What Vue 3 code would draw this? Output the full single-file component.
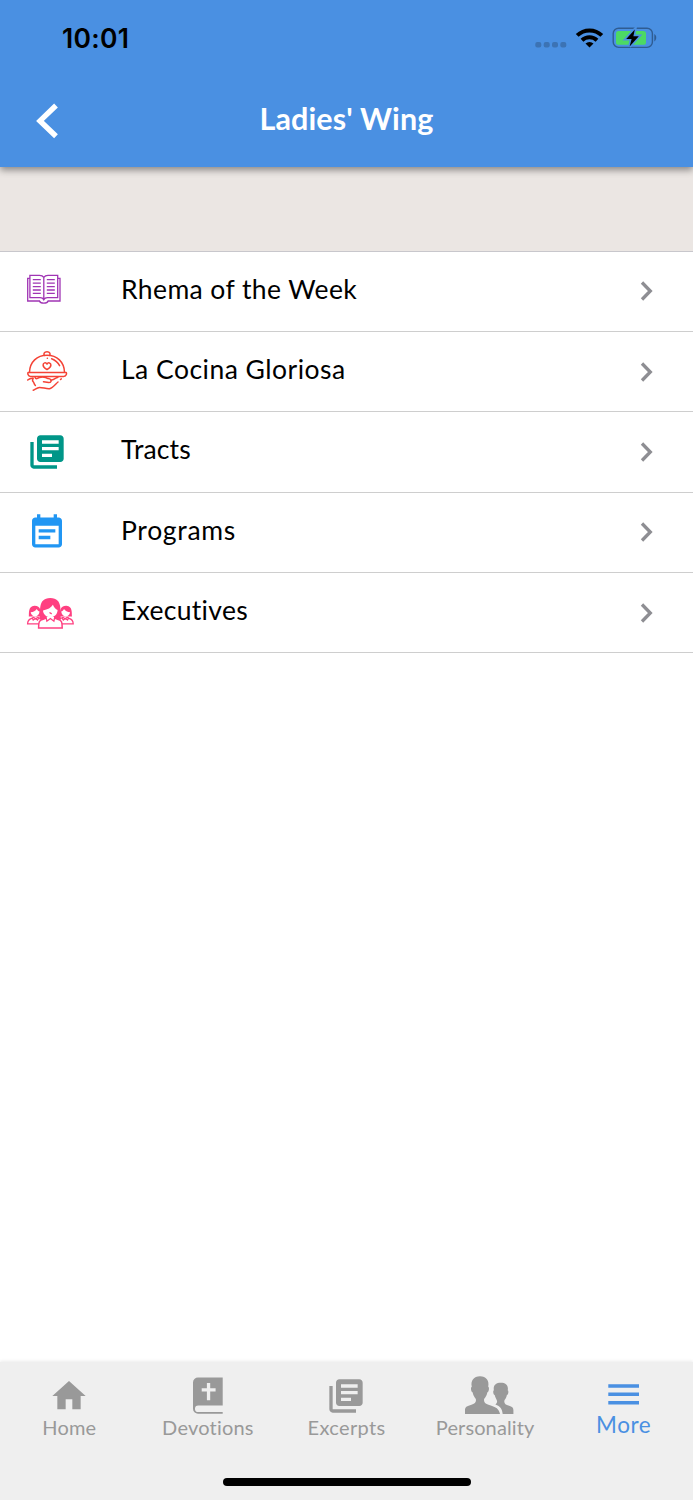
<script setup>
const rows = [
  { id: 'rhema', label: 'Rhema of the Week', spacing: 0.4 },
  { id: 'cocina', label: 'La Cocina Gloriosa', spacing: 0.48 },
  { id: 'tracts', label: 'Tracts', spacing: 0.15 },
  { id: 'programs', label: 'Programs', spacing: 0.7 },
  { id: 'executives', label: 'Executives', spacing: 0.3 }
]

const tabs = [
  { id: 'home', label: 'Home', spacing: 0.2 },
  { id: 'devotions', label: 'Devotions', spacing: 0.2 },
  { id: 'excerpts', label: 'Excerpts', spacing: 0.35 },
  { id: 'personality', label: 'Personality', spacing: 0.1 },
  { id: 'more', label: 'More', spacing: 0.6 }
]

const active = 'more'
</script>

<template>
  <div class="screen">
    <header class="header">
      <div class="status">
        <span class="status__time">10:01</span>
        <svg class="status__icons" width="124" height="24" viewBox="534 26 124 24">
          <g fill="#3c73b4">
            <rect x="535.3" y="42" width="6" height="5.6" rx="2" />
            <rect x="543.7" y="42" width="6" height="5.6" rx="2" />
            <rect x="552" y="42" width="6" height="5.6" rx="2" />
            <rect x="560.3" y="42" width="6" height="5.6" rx="2" />
          </g>
          <g fill="none" stroke="#000" stroke-width="4">
            <path d="M577.2 35.4a17.6 17.6 0 0 1 24.6 0" />
            <path d="M582 40.2a10.8 10.8 0 0 1 15 0" />
          </g>
          <path d="M589.5 47.6l-4-4.1a5.8 5.8 0 0 1 8 0z" />
          <rect x="613.2" y="28.2" width="39.2" height="19.2" rx="5.4" fill="none" stroke="#2f5c92" stroke-width="1.4" />
          <rect x="616" y="31" width="30" height="13.8" rx="2.6" fill="#4cd964" />
          <path d="M654.3 34v7.4c2.6-1.4 2.6-6 0-7.4z" fill="#2f5c92" />
          <path d="M634.8 29.6L626.2 39h5.4l-2 7.4 9.2-10.2h-5.4z" stroke="#4a90e2" stroke-width="3.2" />
          <path d="M634.8 29.6L626.2 39h5.4l-2 7.4 9.2-10.2h-5.4z" />
        </svg>
      </div>
      <div class="nav">
        <svg class="nav__back" width="24" height="36" viewBox="36 103 24 36">
          <path d="M56 105.5L40 120.9l16 15.4" fill="none" stroke="#fff" stroke-width="5.4" />
        </svg>
        <h1 class="nav__title">Ladies' Wing</h1>
      </div>
    </header>

    <div class="band" />

    <ul class="list">
      <li v-for="row in rows" :key="row.id" class="row">
        <svg v-if="row.id === 'rhema'" class="row__icon" width="94" height="79" viewBox="0 0 94 79">
          <g fill="none" stroke="#a035b4" stroke-width="1.3">
            <path d="M43.8 25.4c-1-1.5-2.4-2-4.2-2H29.9v22.3h10.3c1.8 0 2.9.6 3.6 2 .7-1.4 1.8-2 3.6-2h10.3V23.4H48c-1.8 0-3.2.5-4.2 2zv22" />
            <path d="M29.9 26.4h-2.2V49h11.8c.4 1.4 2.2 2.2 4.3 2.2s3.9-.8 4.3-2.2H60V26.4h-2.3" />
            <path d="M32.8 27.7h8M32.8 31.2h8M32.8 34.6h8M32.8 38h8M32.8 41.3h8M46.8 27.7h8M46.8 31.2h8M46.8 34.6h8M46.8 38h8M46.8 41.3h8" />
          </g>
        </svg>
        <svg v-else-if="row.id === 'cocina'" class="row__icon" width="94" height="79" viewBox="0 0 94 79">
          <g fill="none" stroke="#f44336" stroke-width="1.5" stroke-linecap="round" stroke-linejoin="round">
            <path d="M44.4 23.4c-1-1.4-.5-3.6 2.6-3.6s3.6 2.2 2.6 3.6" />
            <path d="M29.5 40.2c.3-10.3 7.5-17 17.5-17s17.2 6.7 17.5 17" />
            <path d="M28.3 40.5H66c1 0 .7 3.9-2.3 3.9H30.5c-2.7 0-3.2-3.9-2.2-3.9z" />
            <path d="M47 37.6c-2.5-1.5-3.9-3-3.9-4.7 0-2.2 2.7-2.9 3.9-.9 1.2-2 3.9-1.1 3.9.9 0 1.7-1.4 3.2-3.9 4.7z" />
            <path d="M51.6 26.7c3.5 1.3 6.4 3.7 8 7M47.3 26.300h.1" />
            <path d="M27.700 48c1.500-1.400 3-1.700 5.200-1.700" />
            <path d="M33 46.300c-.6 1.600-.7 2.700.2 3.500 1.100 1.100.6 2.400 2.200 3.700" />
            <path d="M35 45c.2 1.300.9 1.800 1.800 1.600 1.700-1.300 3.500-1.700 5.800-1.700 2.500 0 4 .6 5.500 1.700 2.300.3 3.500 1.200 2.900 2.800-.4 1-2 1.200-4 .9l-3.500-.5" />
            <path d="M51 48.200c2.700-.2 4.800-2 7-3.200M60.500 47.500l.8-.6M58 50c-2.400 1.900-5 6-8.500 6.700-3.300.3-6.800-1.300-10-1.200-2.400.4-4.200 1.900-6.300 2.800" />
          </g>
        </svg>
        <svg v-else-if="row.id === 'tracts'" class="row__icon" width="94" height="79" viewBox="0 0 94 79">
          <path transform="translate(27 20) scale(1.667)" fill="#009688" d="M4 6H2v14c0 1.100.9 2 2 2h14v-2H4V6zm16-4H8c-1.100 0-2 .9-2 2v12c0 1.100.9 2 2 2h12c1.100 0 2-.9 2-2V4c0-1.100-.9-2-2-2zm-1 9H9V9h10v2zm-4 4H9v-2h6v2zm4-8H9V5h10v2z" />
        </svg>
        <svg v-else-if="row.id === 'programs'" class="row__icon" width="94" height="79" viewBox="0 0 94 79">
          <path transform="translate(27 19.5) scale(1.667)" fill="#2196f3" d="M17 10H7v2h10v-2zm2-7h-1V1h-2v2H8V1H6v2H5c-1.110 0-1.990.9-1.990 2L3 19c0 1.100.89 2 2 2h14c1.100 0 2-.9 2-2V5c0-1.100-.9-2-2-2zm0 16H5V8h14v11zm-5-5H7v2h7v-2z" />
        </svg>
        <svg v-else class="row__icon" width="94" height="79" viewBox="0 0 94 79">
          <defs>
            <g id="side-woman">
              <path d="M28.8 43.500c.4-3.200-1-10.200 5.600-10.800 6.300-.2 6.900 5.500 6.300 10.800z" fill="#ff4081" />
              <path d="M30.700 39.300c2.600-.4 4.900-1.300 6.100-3.300.7 1.400 1.700 2.300 2.800 2.600-.4 2.900-2.100 4.900-4.400 4.900s-4.100-1.700-4.500-4.200z" fill="#fff" />
              <path d="M40 50.800H27.600c.1-3.200.9-4.700 4.200-5.500l1.900-.8 2 1.200 2-1.200 4.400 1.600z" fill="#fff" stroke="#ff4081" stroke-width="1.300" />
              <path d="M32 44.500l1.200 2.600 2.300-1.500 2 1.500 1.200-2" fill="none" stroke="#ff4081" stroke-width="1.200" />
            </g>
          </defs>
          <use href="#side-woman" />
          <use href="#side-woman" transform="translate(100.800 0) scale(-1 1)" />
          <path d="M39.500 46.500c1.700-7.500-2.700-21.300 10.800-21.500 13.500.2 9.100 14 10.800 21.500z" fill="#ff4081" />
          <path d="M43 37.400c4.700-.8 8.100-2.600 9.900-5.600 1 2.700 2.600 4.400 4.700 5.100-.1 4.300-3.200 7.300-7.200 7.300-4.100 0-7.100-2.900-7.400-6.800z" fill="#fff" />
          <path d="M38.600 54.900c0-5.900.4-7.600 4.600-8.600l3.700-1.600h7l3.700 1.600c4.200 1 4.600 2.700 4.600 8.600z" fill="#fff" stroke="#ff4081" stroke-width="1.500" />
          <path d="M46 43.900l.9 4.300 3.500-2.700 3.500 2.700.9-4.300" fill="#fff" stroke="#ff4081" stroke-width="1.300" />
          <path d="M49.500 39.500l2.200 1.300" stroke="#ff4081" stroke-width="1.400" />
        </svg>
        <span class="row__label" :style="{ letterSpacing: `${row.spacing}px` }">{{ row.label }}</span>
        <svg class="row__chevron" width="16" height="22" viewBox="0 0 16 22">
          <path d="M3 2.500l8.300 8.500L3 19.500" fill="none" stroke="#8e8e93" stroke-width="3.300" />
        </svg>
      </li>
    </ul>

    <nav class="tabs">
      <div v-for="tab in tabs" :key="tab.id" class="tab" :class="{ 'tab--active': tab.id === active }">
        <svg v-if="tab.id === 'home'" class="tab__icon" width="40" height="40" viewBox="0 0 24 24">
          <path d="M10 20v-6h4v6h5v-8h3L12 3 2 12h3v8z" />
        </svg>
        <svg v-else-if="tab.id === 'devotions'" class="tab__icon" width="40" height="40" viewBox="0 0 40 40">
          <path d="M34.700 1.500H10a5 5 0 0 0-5 5v26.300a5 5 0 0 0 5 5h24.700v-1.700H10.300a3.200 3.200 0 0 1 0-6.700h24.400zM18.900 7h3.300v5.200h5.400v3.200h-5.400v8.900h-3.300v-8.900h-5.200v-3.200h5.200z" fill-rule="evenodd" />
        </svg>
        <svg v-else-if="tab.id === 'excerpts'" class="tab__icon" width="40" height="40" viewBox="0 0 24 24">
          <path d="M4 6H2v14c0 1.100.9 2 2 2h14v-2H4V6zm16-4H8c-1.100 0-2 .9-2 2v12c0 1.100.9 2 2 2h12c1.100 0 2-.9 2-2V4c0-1.100-.9-2-2-2zm-1 9H9V9h10v2zm-4 4H9v-2h6v2zm4-8H9V5h10v2z" />
        </svg>
        <svg v-else-if="tab.id === 'personality'" class="tab__icon" width="60" height="40" viewBox="455 1376 60 40">
          <path d="M465 1414v-4.500c0-2.300 2-3.400 5-4.300 4.200-1.300 6-2.200 6-5.400 0-1.600-2.600-3-3.300-7.300-1.800-.4-2.300-5.300-.9-5.700-1.400-6.200 2.100-10.600 8.200-10.600s9.600 4.400 8.200 10.600c1.400.4.9 5.300-.9 5.700-.7 4.300-3.300 5.700-3.300 7.300 0 3.200 1.800 4.100 6 5.400 5.900 1.800 9 3.600 10 8.800z" />
          <path d="M502.700 1414c-.6-5.400-2.300-7.800-7.300-9.600 1.500-1.200 2-2.200 1.500-4-.3-1.100-1.700-2.700-2.200-5.400-1.500-.3-2-4.300-.8-4.700-1-5 2-7.600 6.900-7.600s7.900 2.600 6.900 7.600c1.200.4.7 4.400-.8 4.700-.6 3.600-2.600 4.700-2.600 6.500 0 2.500 1.500 3.200 4.800 4.200 2.900.9 4.300 2 4.300 4.300v4z" />
        </svg>
        <svg v-else class="tab__icon" width="40" height="40" viewBox="0 0 40 40">
          <path d="M4.300 8.200H35v3.500H4.300zM4.300 16.500H35V20H4.300zM4.300 25H35v3.500H4.300z" />
        </svg>
        <span class="tab__label" :style="{ letterSpacing: `${tab.spacing}px` }">{{ tab.label }}</span>
      </div>
      <div class="home-bar" />
    </nav>
  </div>
</template>

<style>
body {
  margin: 0;
}
</style>

<style scoped>
.screen {
  display: flex;
  flex-direction: column;
  width: 693px;
  height: 1500px;
  overflow: hidden;
  background: #fff;
  font-family: Lato, "Liberation Sans", sans-serif;
}

.header {
  position: relative;
  z-index: 1;
  flex: none;
  height: 167px;
  background: #4a90e2;
  box-shadow: 0 3px 7px rgba(0, 0, 0, 0.42);
}

.status {
  display: flex;
  justify-content: space-between;
  box-sizing: border-box;
  height: 73px;
  padding: 26px 35px 0 62px;
}

.status__time {
  font: 600 26.5px/24px Inter, sans-serif;
  letter-spacing: 0.3px;
}

.nav {
  display: grid;
  grid-template-columns: 60px 1fr 60px;
  align-items: center;
  height: 95px;
}

.nav__back {
  margin-left: 36px;
}

.nav__title {
  margin: 0;
  padding-bottom: 5px;
  color: #fff;
  font-size: 30.5px;
  font-weight: 700;
  line-height: 36px;
  letter-spacing: 0.1px;
  text-align: center;
  white-space: nowrap;
}

.band {
  flex: none;
  height: 83.5px;
  background: #ebe6e3;
}

.list {
  flex: 1;
  margin: 0;
  padding: 0;
  border-top: 1px solid #c8c7cc;
  list-style: none;
}

.row {
  display: flex;
  align-items: center;
  box-sizing: border-box;
  height: 80.4px;
  padding-right: 38px;
  border-bottom: 1px solid #cecece;
}

.row__icon {
  flex: none;
}

.row__label {
  flex: 1;
  padding: 0 0 5px 27px;
  color: #000;
  font-size: 26.5px;
  line-height: 34px;
}

.tabs {
  display: grid;
  flex: none;
  grid-template-columns: repeat(5, 1fr);
  grid-template-rows: 1fr 18px;
  box-sizing: border-box;
  height: 138px;
  padding-top: 14px;
  background: #efefef;
  box-shadow: 0 -1px 3px rgba(0, 0, 0, 0.08);
}

.tab {
  display: flex;
  flex-direction: column;
  align-items: center;
  color: #999;
}

.tab__icon {
  fill: currentColor;
}

.tab__label {
  margin-top: -2px;
  font-size: 20px;
  line-height: 26px;
}

.tab--active {
  color: #4a90e2;
}

.tab--active .tab__label {
  margin-top: -4px;
  font-size: 22.5px;
}

.home-bar {
  grid-column: 1 / -1;
  justify-self: center;
  align-self: start;
  width: 248px;
  height: 8px;
  margin-top: -4px;
  border-radius: 4px;
  background: #000;
}
</style>
